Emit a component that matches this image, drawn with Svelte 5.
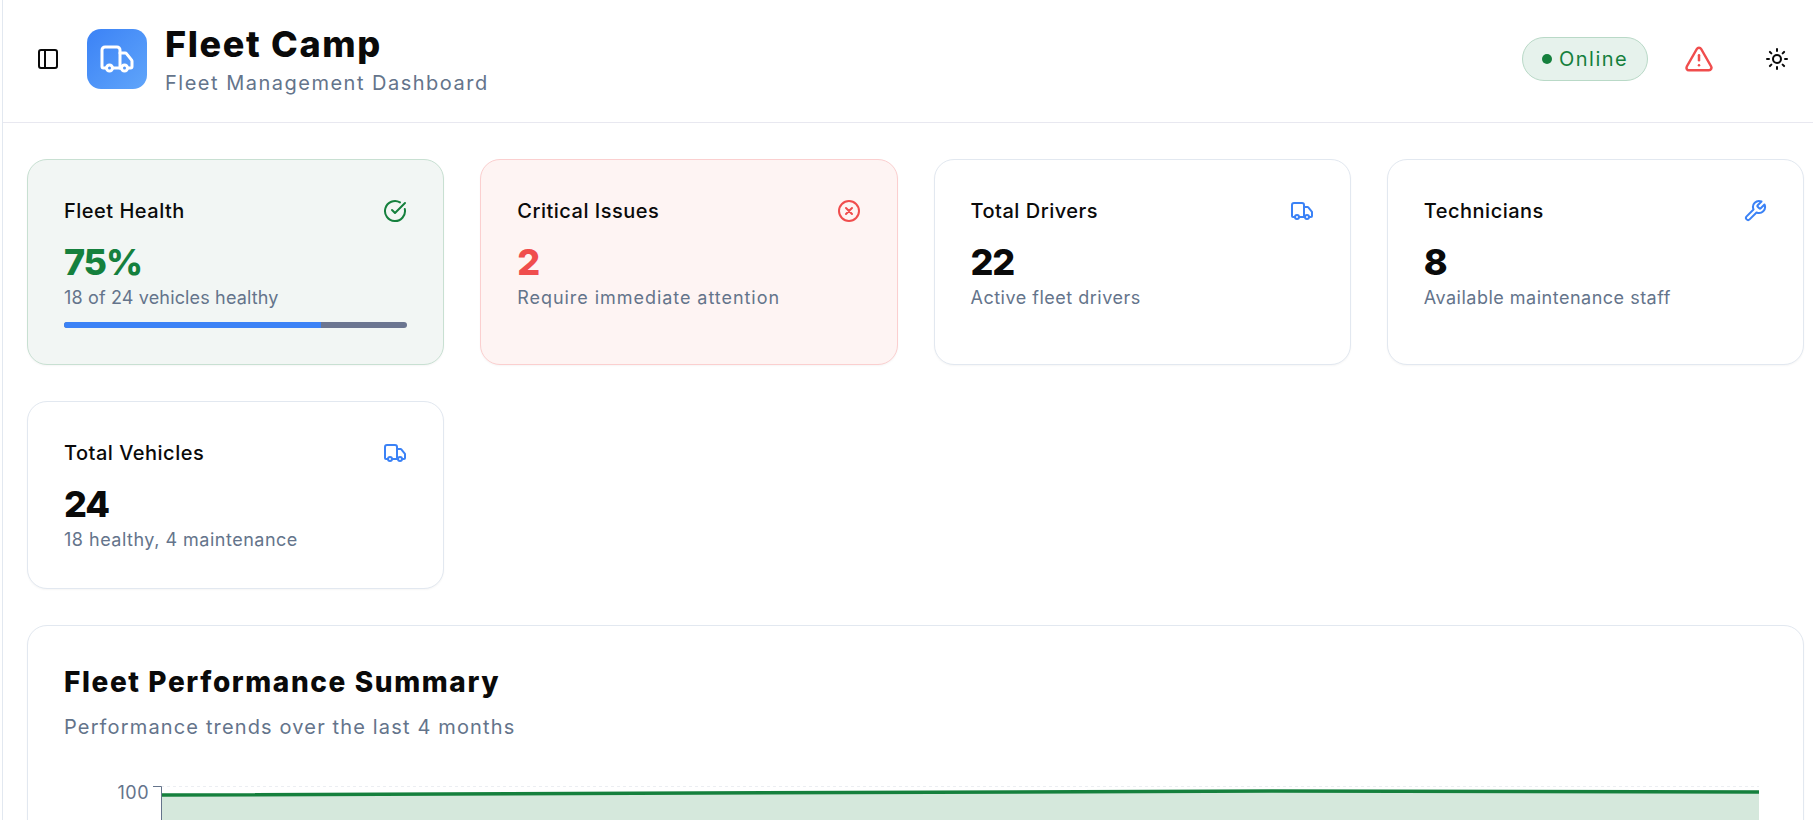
<script lang="ts">
	const cards = [
		{ title: 'Total Drivers', value: '22', note: 'Active fleet drivers', icon: 'truck' },
		{ title: 'Technicians', value: '8', note: 'Available maintenance staff', icon: 'wrench' },
		{ title: 'Total Vehicles', value: '24', note: '18 healthy, 4 maintenance', icon: 'truck' }
	];

	const healthPercent = 75;
</script>

{#snippet truck(size)}
	<svg width={size} height={size} viewBox="0 0 24 24" fill="none" stroke="currentColor" stroke-width="2" stroke-linecap="round" stroke-linejoin="round">
		<path d="M14 18V6a2 2 0 0 0-2-2H4a2 2 0 0 0-2 2v11a1 1 0 0 0 1 1h2" />
		<path d="M15 18H9" />
		<path d="M19 18h2a1 1 0 0 0 1-1v-3.65a1 1 0 0 0-.22-.624l-3.48-4.35A1 1 0 0 0 17.52 8H14" />
		<circle cx="17" cy="18" r="2" />
		<circle cx="7" cy="18" r="2" />
	</svg>
{/snippet}

{#snippet wrench()}
	<svg width="24" height="24" viewBox="0 0 24 24" fill="none" stroke="currentColor" stroke-width="2" stroke-linecap="round" stroke-linejoin="round">
		<path d="M14.7 6.3a1 1 0 0 0 0 1.4l1.6 1.6a1 1 0 0 0 1.4 0l3.77-3.77a6 6 0 0 1-7.94 7.94l-6.91 6.91a2.12 2.12 0 0 1-3-3l6.91-6.91a6 6 0 0 1 7.94-7.94l-3.76 3.76z" />
	</svg>
{/snippet}

<div class="layout">
	<div class="rail"></div>
	<main>
		<header>
			<div class="brand">
				<button class="icon-btn panel" type="button" aria-label="Toggle sidebar">
					<svg width="24" height="24" viewBox="0 0 24 24" fill="none" stroke="currentColor" stroke-width="2" stroke-linecap="round" stroke-linejoin="round">
						<rect x="3" y="3" width="18" height="18" rx="2" />
						<path d="M9 3v18" />
					</svg>
				</button>
				<div class="logo">{@render truck(36)}</div>
				<div class="brand-text">
					<h1>Fleet Camp</h1>
					<p>Fleet Management Dashboard</p>
				</div>
			</div>
			<div class="actions">
				<span class="status"><i></i>Online</span>
				<button class="icon-btn alert" type="button" aria-label="Alerts">
					<svg width="30" height="30" viewBox="0 0 24 24" fill="none" stroke="currentColor" stroke-width="2" stroke-linecap="round" stroke-linejoin="round">
						<path d="m21.73 18-8-14a2 2 0 0 0-3.48 0l-8 14A2 2 0 0 0 4 21h16a2 2 0 0 0 1.73-3" />
						<path d="M12 9v4" />
						<path d="M12 17h.01" />
					</svg>
				</button>
				<button class="icon-btn sun" type="button" aria-label="Toggle theme">
					<svg width="24" height="24" viewBox="0 0 24 24" fill="none" stroke="currentColor" stroke-width="2" stroke-linecap="round" stroke-linejoin="round">
						<circle cx="12" cy="12" r="4" />
						<path d="M12 2v2M12 20v2M4.93 4.93l1.41 1.41M17.66 17.66l1.41 1.41M2 12h2M20 12h2M6.34 17.66l-1.41 1.41M19.07 4.93l-1.41 1.41" />
					</svg>
				</button>
			</div>
		</header>

		<div class="content">
			<section class="grid">
				<article class="card health">
					<div class="card-head">
						<h3>Fleet Health</h3>
						<svg class="green" width="24" height="24" viewBox="0 0 24 24" fill="none" stroke="currentColor" stroke-width="2" stroke-linecap="round" stroke-linejoin="round">
							<path d="M21.8 10A10 10 0 1 1 17 3.34" />
							<path d="m9 11 3 3L22 4" />
						</svg>
					</div>
					<div class="value green">{healthPercent}%</div>
					<p class="note">18 of 24 vehicles healthy</p>
					<div class="bar"><div class="fill" style="width: {healthPercent}%"></div></div>
				</article>

				<article class="card critical">
					<div class="card-head">
						<h3>Critical Issues</h3>
						<svg class="red" width="24" height="24" viewBox="0 0 24 24" fill="none" stroke="currentColor" stroke-width="2" stroke-linecap="round" stroke-linejoin="round">
							<circle cx="12" cy="12" r="10" />
							<path d="m15 9-6 6M9 9l6 6" />
						</svg>
					</div>
					<div class="value red">2</div>
					<p class="note">Require immediate attention</p>
				</article>

				{#each cards as card}
					<article class="card">
						<div class="card-head">
							<h3>{card.title}</h3>
							<span class="blue">
								{#if card.icon === 'truck'}
									{@render truck(24)}
								{:else}
									{@render wrench()}
								{/if}
							</span>
						</div>
						<div class="value">{card.value}</div>
						<p class="note">{card.note}</p>
					</article>
				{/each}
			</section>

			<section class="card summary">
				<h2>Fleet Performance Summary</h2>
				<p class="summary-sub">Performance trends over the last 4 months</p>
				<svg class="chart" width="1702" height="300" viewBox="0 0 1702 300">
					<line x1="97" y1="11.5" x2="1695" y2="11.5" stroke="#eceef2" stroke-dasharray="3 3" />
					<path d="M97 20 L1208 16 L1695 17 V300 H97 Z" fill="#d5e8dc" />
					<path d="M97 20 L1208 16 L1695 17" fill="none" stroke="#15803d" stroke-width="3.5" />
					<path d="M89 11.5 H97.5 V300" fill="none" stroke="#64748b" />
					<text x="85" y="24" text-anchor="end">100</text>
				</svg>
			</section>
		</div>
	</main>
</div>

<style>
	:global(body) {
		margin: 0;
		background: #fff;
		overflow: hidden;
	}

	.layout {
		display: flex;
		height: 820px;
		overflow: hidden;
		font-family: Inter, 'Noto Sans', sans-serif;
		color: #0a0a0a;
	}

	.rail {
		width: 2px;
		flex-shrink: 0;
		border-right: 1px solid #e2e8f0;
	}

	main {
		flex: 1;
		min-width: 0;
	}

	header {
		display: flex;
		align-items: center;
		justify-content: space-between;
		box-sizing: border-box;
		height: 123px;
		border-bottom: 1px solid #e8e8f0;
		padding: 0 24px 4px 29px;
	}

	.brand {
		display: flex;
		align-items: center;
	}

	.icon-btn {
		display: flex;
		align-items: center;
		justify-content: center;
		padding: 0;
		border: none;
		background: none;
		color: inherit;
		cursor: pointer;
	}

	.panel {
		width: 32px;
		margin-right: 23px;
	}

	.logo {
		display: flex;
		align-items: center;
		justify-content: center;
		width: 60px;
		height: 60px;
		border-radius: 14px;
		background: linear-gradient(135deg, #3b82f6, #60a5fa);
		color: #fff;
	}

	.brand-text {
		margin-left: 18px;
		padding-top: 3px;
	}

	h1 {
		margin: 0;
		font-size: 36px;
		line-height: 40px;
		font-weight: 800;
		letter-spacing: 1.65px;
	}

	.brand-text p {
		margin: 5px 0 0;
		font-size: 20px;
		line-height: 28px;
		color: #64748b;
		letter-spacing: 1.5px;
	}

	.actions {
		display: flex;
		align-items: center;
	}

	.status {
		display: flex;
		align-items: center;
		box-sizing: border-box;
		width: 126px;
		height: 44px;
		padding-left: 19px;
		border: 1px solid #b9d9c7;
		border-radius: 22px;
		background: #e6f2ec;
		color: #15803d;
		font-size: 20px;
		letter-spacing: 1.5px;
	}

	.status i {
		width: 10px;
		height: 10px;
		margin-right: 7px;
		border-radius: 50%;
		background: #15803d;
	}

	.alert {
		margin-left: 36px;
		color: #f04d4d;
	}

	.sun {
		margin-left: 51px;
	}

	.content {
		padding: 36px 9px 0 24px;
	}

	.grid {
		display: grid;
		grid-template-columns: repeat(4, 1fr);
		gap: 36px;
	}

	.card {
		box-sizing: border-box;
		padding: 36px 36px 34px;
		border: 1px solid #e2e8f0;
		border-radius: 20px;
		background: #fff;
		box-shadow: 0 1px 2px rgb(0 0 0 / 0.04);
	}

	.health {
		padding-bottom: 36px;
		background: #f2f6f4;
		border-color: #c8e0d2;
	}

	.critical {
		background: #fef4f3;
		border-color: #fbcfcf;
	}

	.card-head {
		display: flex;
		align-items: center;
		justify-content: space-between;
		height: 30px;
		margin-bottom: 16px;
	}

	.card-head span {
		display: flex;
	}

	h3 {
		margin: 0;
		font-size: 20px;
		line-height: 30px;
		font-weight: 450;
		letter-spacing: 0.5px;
	}

	.value {
		font-size: 36px;
		line-height: 40px;
		font-weight: 800;
		margin-bottom: 2px;
		letter-spacing: -1.2px;
	}

	.note {
		margin: 0;
		font-size: 18px;
		line-height: 28px;
		color: #64748b;
		letter-spacing: 0.5px;
	}

	.health .note {
		letter-spacing: 0.15px;
	}

	.critical .note {
		letter-spacing: 0.95px;
	}

	.bar {
		height: 6px;
		margin-top: 10px;
		border-radius: 3px;
		overflow: hidden;
		background: #6b7590;
	}

	.fill {
		height: 100%;
		background: #3b82f6;
	}

	.green {
		color: #15803d;
	}

	.red {
		color: #f04d4d;
	}

	.blue {
		color: #3b82f6;
	}

	.summary {
		margin-top: 36px;
		height: 400px;
		padding-top: 35px;
	}

	h2 {
		margin: 0;
		font-size: 28px;
		line-height: 42px;
		font-weight: 800;
		letter-spacing: 1.6px;
	}

	.summary-sub {
		margin: 10px 0 0;
		font-size: 20px;
		line-height: 28px;
		color: #64748b;
		letter-spacing: 1.15px;
	}

	.chart {
		display: block;
		margin-top: 34px;
	}

	.chart text {
		font-size: 18px;
		fill: #64748b;
		letter-spacing: 0.5px;
	}
</style>
